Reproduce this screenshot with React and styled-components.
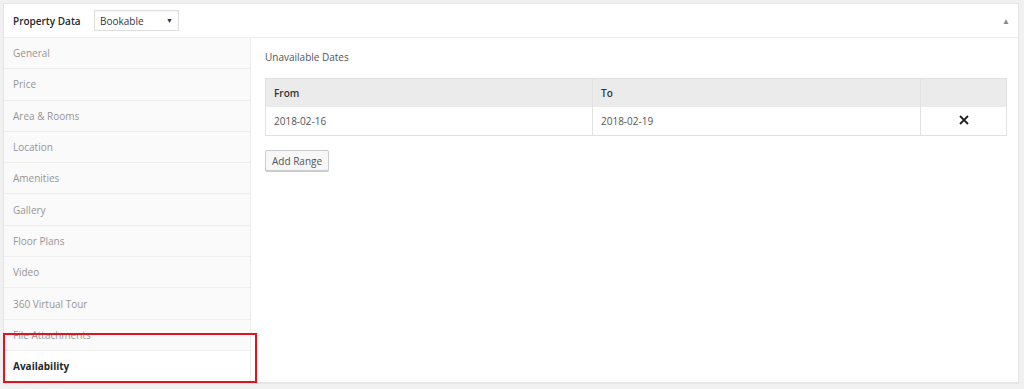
import React from 'react'
import styled, { createGlobalStyle } from 'styled-components'

const GlobalStyle = createGlobalStyle`
  html, body {
    margin: 0;
    padding: 0;
    background: #f1f1f1;
    font-family: "Open Sans", "Noto Sans", sans-serif;
  }
`;

const Page = styled.div`
  padding: 3px 5px 6px 3px;
  width: 1024px;
  height: 389px;
  box-sizing: border-box;
`;

const Panel = styled.div`
  position: relative;
  background: #fff;
  border: 1px solid #e5e5e5;
  box-shadow: 0 1px 1px rgba(0, 0, 0, 0.04);
  height: 100%;
  box-sizing: border-box;
  display: flex;
  flex-direction: column;
`;

const Header = styled.div`
  display: flex;
  align-items: center;
  height: 34px;
  padding: 0 8px 0 9px;
  border-bottom: 1px solid #eee;
  box-sizing: border-box;
  flex-shrink: 0;
`;

const Title = styled.h2`
  margin: 0;
  width: 81px;
  white-space: nowrap;
  font-size: 10px;
  font-weight: 600;
  color: #23282d;
`;

const Select = styled.div`
  display: flex;
  align-items: center;
  justify-content: space-between;
  width: 85px;
  height: 21px;
  box-sizing: border-box;
  padding: 0 5px;
  border: 1px solid #ddd;
  box-shadow: inset 0 1px 2px rgba(0, 0, 0, 0.05);
  font-size: 10px;
  color: #32373c;
  background: #fff;
`;

const Caret = styled.span`
  font-size: 7px;
  color: #333;
`;

const Toggle = styled.span`
  margin-left: auto;
  font-size: 8px;
  color: #888;
`;

const Body = styled.div`
  display: flex;
  flex: 1;
  min-height: 0;
`;

const Tabs = styled.ul`
  list-style: none;
  margin: 0;
  padding: 0;
  width: 247px;
  background: #fafafa;
  border-right: 1px solid #eee;
  box-sizing: border-box;
  display: flex;
  flex-direction: column;
`;

const Tab = styled.li`
  height: 31.3px;
  box-sizing: border-box;
  display: flex;
  align-items: center;
  padding-left: 9px;
  border-bottom: 1px solid #eee;
  font-size: 10px;
  color: ${p => (p.$active ? '#23282d' : '#959595')};
  font-weight: ${p => (p.$active ? 700 : 400)};
  background: ${p => (p.$active ? '#fff' : 'transparent')};
  flex: ${p => (p.$active ? 1 : 'none')};
  border-bottom-color: ${p => (p.$active ? 'transparent' : '#eee')};
`;

const Content = styled.div`
  flex: 1;
  padding: 12px 11px 0 14px;
`;

const Heading = styled.p`
  margin: 0 0 14px;
  font-size: 10px;
  color: #555;
`;

const Table = styled.table`
  width: 100%;
  border-collapse: collapse;
  border: 1px solid #e1e1e1;
  font-size: 10px;
  color: #555;
`;

const Th = styled.th`
  background: #ebebeb;
  height: 28px;
  padding: 0 8px;
  text-align: left;
  font-weight: 600;
  color: #333;
  border-left: 1px solid #e1e1e1;
  width: ${p => p.$w || 'auto'};
`;

const Td = styled.td`
  height: 28px;
  padding: 0 8px;
  border-left: 1px solid #e1e1e1;
  text-align: ${p => (p.$center ? 'center' : 'left')};
`;

const Button = styled.button`
  margin-top: 14px;
  height: 21px;
  padding: 0 6px;
  font-family: inherit;
  font-size: 10px;
  color: #555;
  background: #f7f7f7;
  border: 1px solid #ccc;
  border-radius: 2px;
  box-shadow: 0 1px 0 #ccc;
`;

const Highlight = styled.div`
  position: absolute;
  left: -1px;
  top: 329px;
  width: 254px;
  height: 50px;
  box-sizing: border-box;
  border: 2px solid #e0141e;
  pointer-events: none;
`;

const tabs = [
  'General',
  'Price',
  'Area & Rooms',
  'Location',
  'Amenities',
  'Gallery',
  'Floor Plans',
  'Video',
  '360 Virtual Tour',
  'File Attachments',
  'Availability',
];

export default function App() {
  return (
    <Page>
      <GlobalStyle />
      <Panel>
        <Header>
          <Title>Property Data</Title>
          <Select>
            Bookable <Caret>▼</Caret>
          </Select>
          <Toggle>▲</Toggle>
        </Header>
        <Body>
          <Tabs>
            {tabs.map(t => (
              <Tab key={t} $active={t === 'Availability'}>{t}</Tab>
            ))}
          </Tabs>
          <Content>
            <Heading>Unavailable Dates</Heading>
            <Table>
              <thead>
                <tr>
                  <Th $w="310px">From</Th>
                  <Th $w="311px">To</Th>
                  <Th />
                </tr>
              </thead>
              <tbody>
                <tr>
                  <Td>2018-02-16</Td>
                  <Td>2018-02-19</Td>
                  <Td $center>
                    <svg width="10" height="10" viewBox="0 0 10 10">
                      <path d="M1 1 L9 9 M9 1 L1 9" stroke="#222" strokeWidth="1.8" />
                    </svg>
                  </Td>
                </tr>
              </tbody>
            </Table>
            <Button>Add Range</Button>
          </Content>
        </Body>
        <Highlight />
      </Panel>
    </Page>
  )
}
